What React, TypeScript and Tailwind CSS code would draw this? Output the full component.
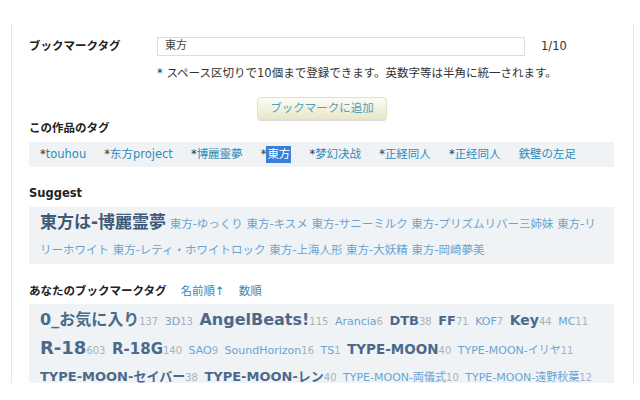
import React from 'react';

const font = { fontFamily: '"DejaVu Sans", "Noto Sans CJK JP", sans-serif' };

const workTags = [
  { label: 'touhou', star: true },
  { label: '东方project', star: true },
  { label: '博麗靈夢', star: true },
  { label: '東方', star: true, selected: true },
  { label: '梦幻决战', star: true },
  { label: '正経同人', star: true },
  { label: '正经同人', star: true },
  { label: '鉄壁の左足', star: false },
];

const suggest = [
  '東方-ゆっくり',
  '東方-キスメ',
  '東方-サニーミルク',
  '東方-プリズムリバー三姉妹',
  '東方-リリーホワイト',
  '東方-レティ・ホワイトロック',
  '東方-上海人形',
  '東方-大妖精',
  '東方-岡崎夢美',
];

type MyTag = { name: string; count: number; size?: string };

// size only for the bold (heavily used) tags
const myTags: MyTag[] = [
  { name: '0_お気に入り', count: 137, size: 'text-[16px]' },
  { name: '3D', count: 13 },
  { name: 'AngelBeats!', count: 115, size: 'text-[16px]' },
  { name: 'Arancia', count: 6 },
  { name: 'DTB', count: 38, size: 'text-[13px]' },
  { name: 'FF', count: 71, size: 'text-[13px]' },
  { name: 'KOF', count: 7 },
  { name: 'Key', count: 44, size: 'text-[14px]' },
  { name: 'MC', count: 11 },
  { name: 'R-18', count: 603, size: 'text-[18px]' },
  { name: 'R-18G', count: 140, size: 'text-[15px]' },
  { name: 'SAO', count: 9 },
  { name: 'SoundHorizon', count: 16 },
  { name: 'TS', count: 1 },
  { name: 'TYPE-MOON', count: 40, size: 'text-[13.5px]' },
  { name: 'TYPE-MOON-イリヤ', count: 11 },
  { name: 'TYPE-MOON-セイバー', count: 38, size: 'text-[13px]' },
  { name: 'TYPE-MOON-レン', count: 40, size: 'text-[13px]' },
  { name: 'TYPE-MOON-両儀式', count: 10 },
  { name: 'TYPE-MOON-遠野秋葉', count: 12 },
];

export default function App() {
  return (
    <div className="w-[640px] h-[400px] bg-white pt-[24px] pl-[11px]" style={font}>
      <div className="w-[623px] h-[359px] overflow-hidden border-l border-r border-[#e6e6e6] pl-[17px] pt-[13px]">
        {/* bookmark tag input */}
        <div className="flex items-center h-[19px]">
          <div className="w-[128px] text-[11.5px] font-bold text-[#222]">ブックマークタグ</div>
          <div className="w-[368px] h-[19px] border border-[#d9dee4] flex items-center px-[7px] text-[11px] text-[#444]">
            東方
          </div>
          <div className="ml-[16px] text-[11.5px] text-[#333]">1/10</div>
        </div>
        <div className="ml-[128px] mt-[9px] text-[11.5px] text-[#333] leading-[16px]">
          * スペース区切りで10個まで登録できます。英数字等は半角に統一されます。
        </div>
        <div className="mt-[14px]">
          <button className="ml-[228px] h-[23px] w-[130px] rounded-[4px] border border-[#e2e0c8] bg-gradient-to-b from-[#fcfcf5] to-[#e8e7c9] shadow-[0_1px_1px_rgba(0,0,0,0.15)] text-[11.5px] text-[#4fa0bc]">
            ブックマークに追加
          </button>
        </div>

        {/* work tags */}
        <div className="text-[11.5px] font-bold text-[#222] leading-[16px]">この作品のタグ</div>
        <div className="w-[585px] mt-[6px] bg-[#f0f3f6] h-[25px] flex items-center pl-[11px] gap-[18px] text-[11.5px]">
          {workTags.map((t) => (
            <span key={t.label} className="text-[#2f8bb9] flex items-center">
              {t.star && <span className="text-[#333]">*</span>}
              {t.selected ? (
                <span className="inline-block h-[17px] leading-[17px] bg-[#3b7fd6] text-white px-[1px]">{t.label}</span>
              ) : (
                t.label
              )}
            </span>
          ))}
        </div>

        {/* suggest */}
        <div className="mt-[18px] text-[11.5px] font-bold text-[#222] leading-[16px]">Suggest</div>
        <div className="w-[585px] mt-[6px] bg-[#f0f3f6] px-[11px] pt-[2px] pb-[1px] leading-[26px] text-[11.5px]">
          <span className="text-[17px] font-bold text-[#3d5a78]">東方は-博麗霊夢</span>{' '}
          {suggest.map((s) => (
            <span key={s} className="text-[#6aa3d2]">
              {s}{' '}
            </span>
          ))}
        </div>

        {/* my tags */}
        <div className="mt-[19px] flex items-center gap-[14px] text-[11.5px] leading-[16px]">
          <span className="font-bold text-[#222]">あなたのブックマークタグ</span>
          <span className="text-[#2f8bb9]">名前順↑</span>
          <span className="text-[#2f8bb9]">数順</span>
        </div>
        <div className="w-[585px] mt-[5px] bg-[#f0f3f6] px-[11px] pt-[3px] pb-[6px] leading-[26px] text-[11px]">
          {myTags.map((t, i) => (
            <React.Fragment key={t.name}>
              <span className={i === myTags.length - 1 ? '' : 'whitespace-nowrap mr-[3px]'}>
                {t.size ? (
                  <span className={`${t.size} font-bold text-[#4b6a8a]`}>{t.name}</span>
                ) : (
                  <span className="text-[11px] text-[#6aa3d2]">{t.name}</span>
                )}
                <span className="text-[10px] text-[#a9b1ba]">{t.count}</span>
              </span>{' '}
            </React.Fragment>
          ))}
        </div>
      </div>
    </div>
  );
}
